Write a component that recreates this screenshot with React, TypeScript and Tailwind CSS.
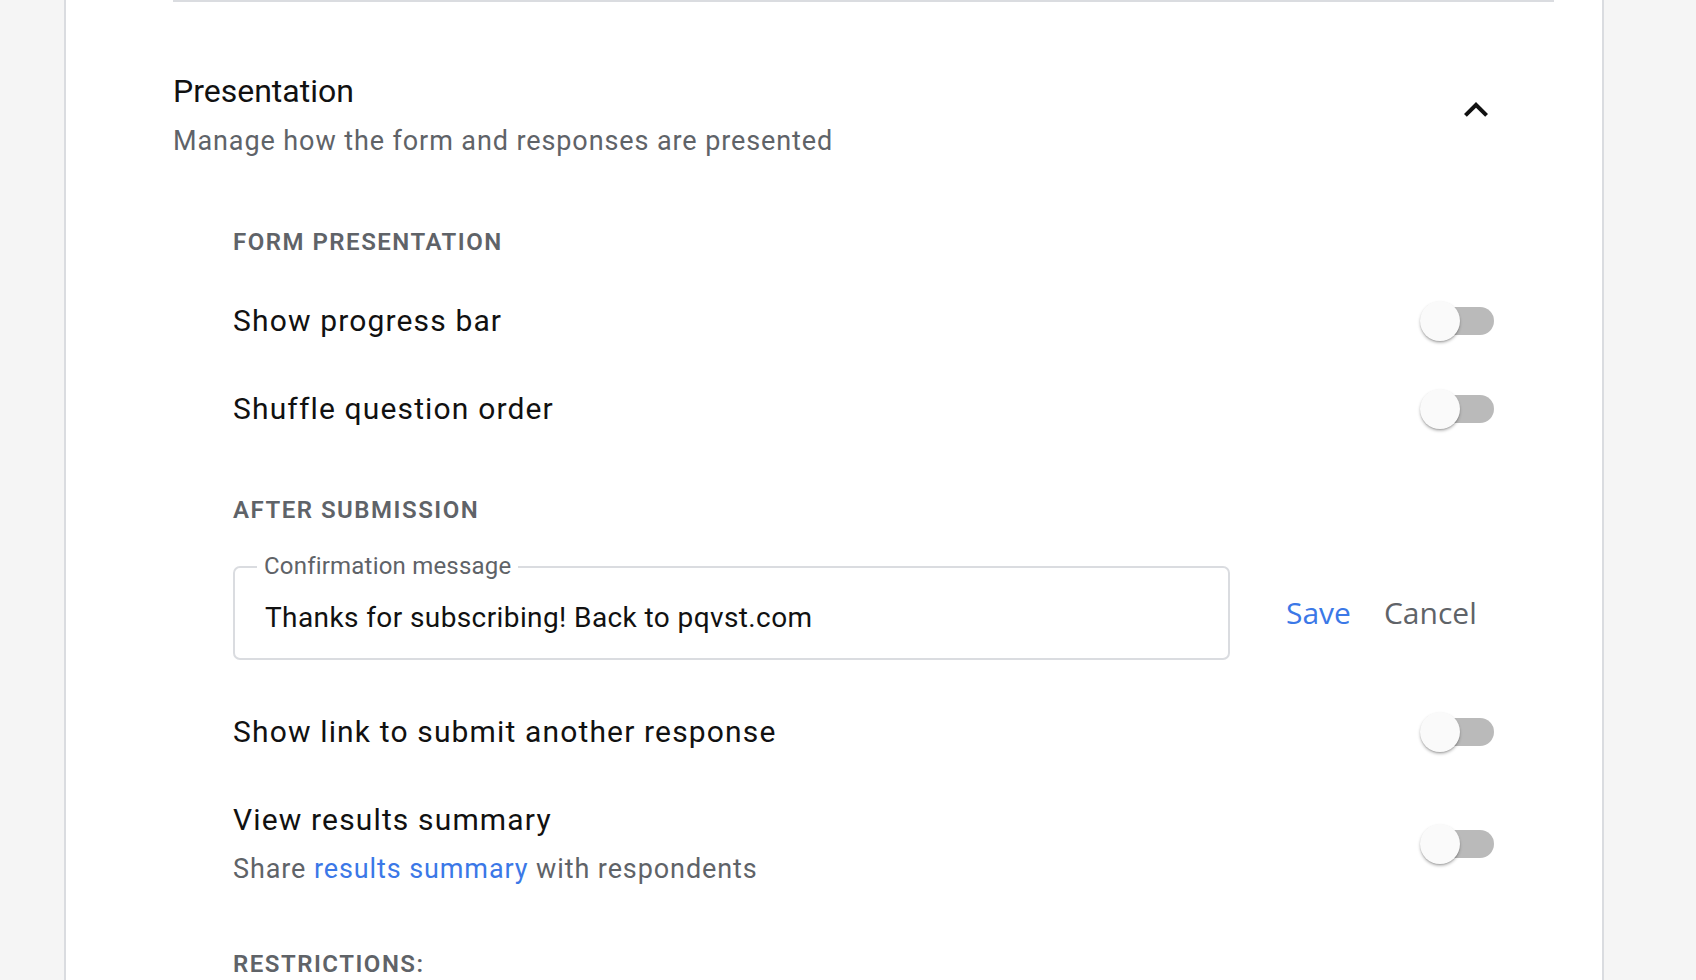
import React from 'react';

const Toggle: React.FC = () => (
  <div className="relative h-[42px] w-[74px] shrink-0">
    <div className="absolute left-[6px] top-[7px] h-[28px] w-[68px] rounded-full bg-[#bababa]" />
    <div className="absolute left-0 top-px h-[40px] w-[40px] rounded-full bg-[#fafafa] shadow-[0_2px_3px_rgba(0,0,0,0.25),0_1px_1px_rgba(0,0,0,0.12)]" />
  </div>
);

const SectionLabel: React.FC<{ children: React.ReactNode; className?: string }> = ({ children, className }) => (
  <div className={`text-[24px] leading-[32px] font-semibold tracking-[1.5px] text-[#5f6368] uppercase ${className ?? ''}`}>
    {children}
  </div>
);

const ToggleRow: React.FC<{ label: string; className?: string }> = ({ label, className }) => (
  <div className={`flex items-center justify-between ${className ?? ''}`}>
    <div className="text-[30px] leading-[40px] tracking-[1.15px] text-[#111]">{label}</div>
    <Toggle />
  </div>
);

export default function App() {
  return (
    <div className="h-[980px] overflow-hidden bg-[#f5f5f5] font-['Roboto',_'Noto_Sans',_sans-serif]">
      <div className="ml-[64px] h-full w-[1540px] border-x-2 border-[#dadce0] bg-white pl-[107px]">
        <div className="w-[1381px]">
          <div className="h-[2px] bg-[#dadce0]" />

          {/* header */}
          <div className="mt-[69px] flex justify-between">
            <div>
              <div className="text-[32px] leading-[40px] text-[#111]">Presentation</div>
              <div className="mt-[12px] text-[27px] leading-[36px] tracking-[0.9px] text-[#5f6368]">
                Manage how the form and responses are presented
              </div>
            </div>
            <svg className="mr-[54px] mt-[15px] h-[48px] w-[48px]" viewBox="0 0 24 24" fill="#111">
              <path d="M12 8l-6 6 1.41 1.41L12 10.83l4.59 4.58L18 14z" />
            </svg>
          </div>

          {/* body */}
          <div className="ml-[60px] w-[1261px]">
            <SectionLabel className="mt-[67px]">Form presentation</SectionLabel>
            <ToggleRow label="Show progress bar" className="mt-[42px]" />
            <ToggleRow label="Shuffle question order" className="mt-[46px]" />

            <SectionLabel className="mt-[64px]">After submission</SectionLabel>

            <div className="mt-[40px] flex items-center">
              <div className="relative w-[997px] rounded-[7px] border-2 border-[#dadce0] pl-[30px] pr-[20px] pt-[32px] pb-[22px]">
                <span className="absolute -top-[18px] left-[22px] bg-white px-[7px] text-[24px] leading-[32px] tracking-[0.2px] text-[#5f6368]">
                  Confirmation message
                </span>
                <div className="text-[28px] leading-[36px] tracking-[0.4px] text-[#111]">
                  Thanks for subscribing! Back to pqvst.com
                </div>
              </div>
              <button className="ml-[56px] font-['Open_Sans',_sans-serif] text-[30px] font-medium leading-[36px] text-[#3b78e7]">
                Save
              </button>
              <button className="ml-[33px] font-['Open_Sans',_sans-serif] text-[30px] font-medium leading-[36px] text-[#5f6368]">
                Cancel
              </button>
            </div>

            <ToggleRow label="Show link to submit another response" className="mt-[51px]" />

            <div className="mt-[47px] flex items-center justify-between">
              <div>
                <div className="text-[30px] leading-[40px] tracking-[1.15px] text-[#111]">View results summary</div>
                <div className="mt-[11px] text-[27px] leading-[36px] tracking-[0.9px] text-[#5f6368]">
                  Share <span className="text-[#3b78e7]">results summary</span> with respondents
                </div>
              </div>
              <Toggle />
            </div>

            <SectionLabel className="mt-[61px]">Restrictions:</SectionLabel>
          </div>
        </div>
      </div>
    </div>
  );
}
